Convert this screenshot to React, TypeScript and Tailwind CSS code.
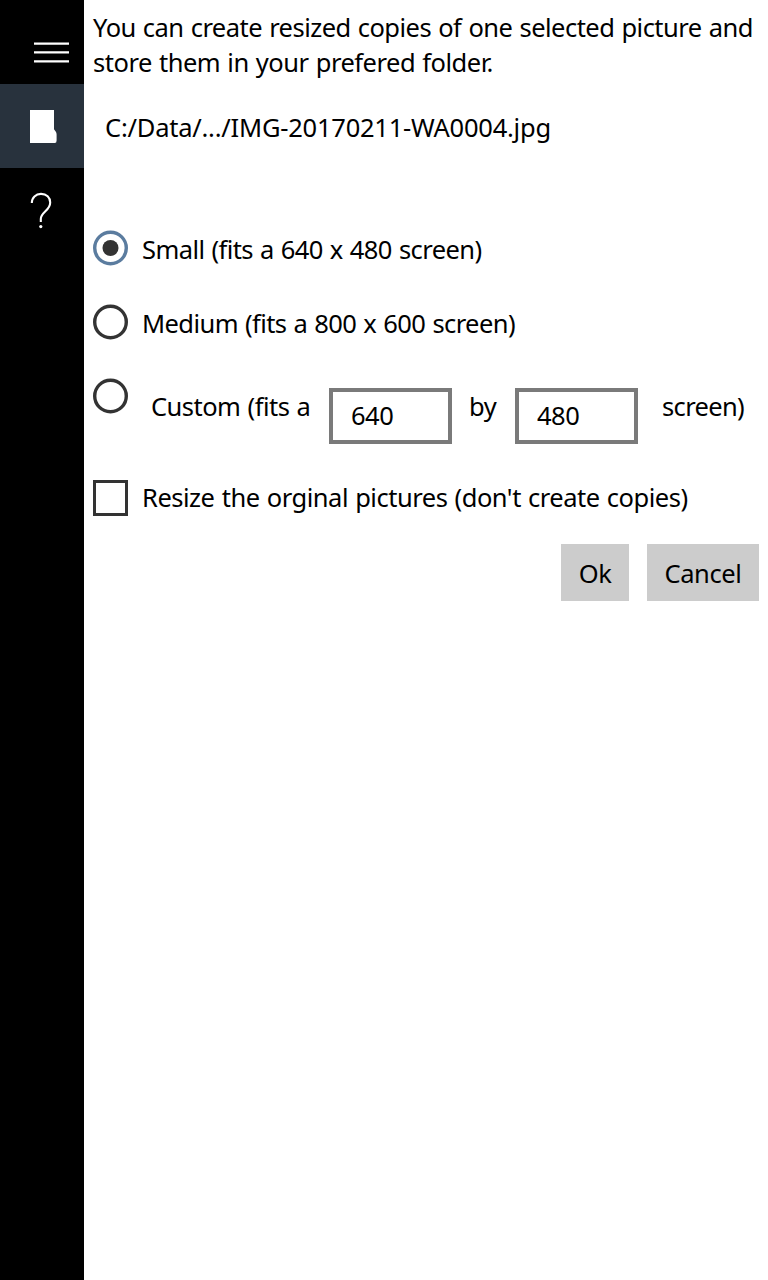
import { useState } from "react";

function Radio({ checked, onSelect, label }: { checked: boolean; onSelect: () => void; label: string }) {
  return (
    <button
      type="button"
      role="radio"
      aria-checked={checked}
      aria-label={label}
      onClick={onSelect}
      className="h-[36px] w-[35px] shrink-0"
    >
      <svg viewBox="0 0 35 36" width="35" height="36" className="block">
        <circle cx="17.5" cy="18" r="15.8" fill="none" stroke={checked ? "#5b7c9f" : "#333333"} strokeWidth="3.4" />
        {checked && <circle cx="17.5" cy="18" r="8" fill="#333333" />}
      </svg>
    </button>
  );
}

export default function App() {
  const [size, setSize] = useState("small");

  return (
    <div className="flex h-[1280px] w-[768px] overflow-hidden bg-white font-['Noto_Sans',sans-serif] text-[25.5px] leading-[35px] [word-spacing:1px] whitespace-nowrap text-black">
      <nav className="flex w-[84px] shrink-0 flex-col bg-black">
        <button type="button" aria-label="Menu" className="h-[84px] w-[84px]">
          <svg viewBox="0 0 84 84" width="84" height="84" className="block">
            <path d="M34 43.6h35M34 52.4h35M34 61.3h35" stroke="#ffffff" strokeWidth="2.2" />
          </svg>
        </button>
        <button type="button" aria-label="Picture" className="h-[84px] w-[84px] bg-[#28323d]">
          <svg viewBox="0 0 84 84" width="84" height="84" className="block">
            <path d="M30 26h24v19.3l2 2.7q.6 1 .6 2.5v6q0 2.5-1.8 2.5H30z" fill="#ffffff" />
          </svg>
        </button>
        <button type="button" aria-label="Help" className="h-[84px] w-[84px]">
          <svg viewBox="0 0 84 84" width="84" height="84" className="block">
            <path
              d="M31.8 35C31.8 29.5 35.8 25.9 41 25.9c5.5 0 9.2 3.5 9.2 8.6 0 4.4-2.5 6.6-5.2 9.2-2.6 2.5-4.2 4-4.2 7.3v3"
              fill="none"
              stroke="#ffffff"
              strokeWidth="2.1"
            />
            <circle cx="40.8" cy="58.6" r="1.6" fill="#ffffff" />
          </svg>
        </button>
      </nav>

      <main className="flex w-[684px] shrink-0 flex-col pt-[10px] pl-[9px]">
        <p>
          <span className="block tracking-[-0.53px]">You can create resized copies of one selected picture and</span>
          <span className="block tracking-[-0.49px]">store them in your prefered folder.</span>
        </p>
        <p className="mt-[30px] ml-[12px] tracking-[-0.23px]">C:/Data/.../IMG-20170211-WA0004.jpg</p>

        <div role="radiogroup" className="mt-[85px] flex flex-col">
          <div className="flex h-[74px] items-start">
            <Radio label="Small" checked={size === "small"} onSelect={() => setSize("small")} />
            <span className="mt-[2px] ml-[14px] tracking-[-0.58px]">Small (fits a 640 x 480 screen)</span>
          </div>
          <div className="flex h-[74px] items-start">
            <Radio label="Medium" checked={size === "medium"} onSelect={() => setSize("medium")} />
            <span className="mt-[2px] ml-[14px] tracking-[-0.58px]">Medium (fits a 800 x 600 screen)</span>
          </div>
          <div className="flex h-[102px] items-start">
            <Radio label="Custom" checked={size === "custom"} onSelect={() => setSize("custom")} />
            <span className="mt-[11px] ml-[23px] w-[178px] tracking-[-0.52px]">Custom (fits a</span>
            <input
              aria-label="Width"
              defaultValue="640"
              className="mt-[10px] h-[56px] w-[123px] border-4 border-[#7a7a7a] pb-[2px] pl-[18px] tracking-[-0.5px]"
            />
            <span className="mt-[11px] ml-[17px] w-[46px] tracking-[-0.4px]">by</span>
            <input
              aria-label="Height"
              defaultValue="480"
              className="mt-[10px] h-[56px] w-[123px] border-4 border-[#7a7a7a] pb-[2px] pl-[18px] tracking-[-0.5px]"
            />
            <span className="mt-[11px] ml-[24px] tracking-[-0.65px]">screen)</span>
          </div>
        </div>

        <label className="flex h-[64px] items-start">
          <input type="checkbox" className="h-[36px] w-[35px] shrink-0 appearance-none border-[3px] border-[#333333]" />
          <span className="ml-[14px] tracking-[-0.48px]">Resize the orginal pictures (don't create copies)</span>
        </label>

        <div className="flex justify-end gap-[18px] pr-[9px]">
          <button type="button" className="h-[57px] w-[68px] bg-[#cccccc] pt-[2px] tracking-[-0.4px]">Ok</button>
          <button type="button" className="h-[57px] w-[112px] bg-[#cccccc] pt-[2px] tracking-[-0.4px]">Cancel</button>
        </div>
      </main>
    </div>
  );
}
